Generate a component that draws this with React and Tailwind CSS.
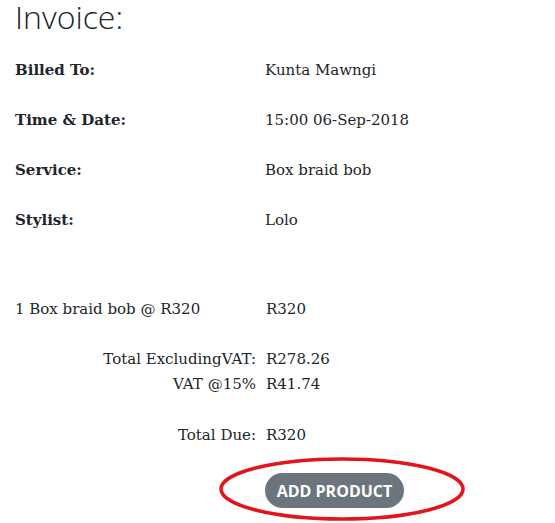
export default function App() {
  const details = [
    ['Billed To:', 'Kunta Mawngi'],
    ['Time & Date:', '15:00 06-Sep-2018'],
    ['Service:', 'Box braid bob'],
    ['Stylist:', 'Lolo'],
  ]

  return (
    <div className="w-[555px] h-[523px] bg-white text-[#212529] px-[15px] overflow-hidden" style={{ fontFamily: '"DejaVu Serif", serif' }}>
      <h1 className="text-[32px] leading-[34px] font-light" style={{ fontFamily: '"Open Sans", sans-serif' }}>Invoice:</h1>

      <div className="mt-[25px] flex flex-col">
        {details.map(([label, value]) => (
          <div key={label} className="flex h-[50px] text-[15px] leading-[22px]">
            <div className="w-[250px] font-bold">{label}</div>
            <div>{value}</div>
          </div>
        ))}
      </div>

      <div className="mt-[39px] flex text-[15px] leading-[22px]">
        <div className="w-[251px]">1 Box braid bob @ R320</div>
        <div>R320</div>
      </div>

      <div className="mt-[27px] text-[15px] leading-[25px]">
        <div className="flex">
          <div className="w-[241px] text-right">Total ExcludingVAT:</div>
          <div className="ml-[10px]">R278.26</div>
        </div>
        <div className="flex">
          <div className="w-[241px] text-right">VAT @15%</div>
          <div className="ml-[10px]">R41.74</div>
        </div>
        <div className="flex mt-[26px]">
          <div className="w-[241px] text-right">Total Due:</div>
          <div className="ml-[10px]">R320</div>
        </div>
      </div>

      <div className="mt-[25px] ml-[250px] relative w-[139px] h-[35px]">
        <button className="w-[139px] h-[35px] rounded-full bg-[#6c757d] text-white font-bold text-[16px] uppercase" style={{ fontFamily: '"Open Sans", sans-serif' }}>
          Add Product
        </button>
        <svg className="absolute left-[-47px] top-[-17px] pointer-events-none" width="250" height="68" viewBox="0 0 250 68">
          <ellipse cx="124" cy="33" rx="121" ry="30" fill="none" stroke="#e3141b" strokeWidth="3.5" />
        </svg>
      </div>
    </div>
  )
}
